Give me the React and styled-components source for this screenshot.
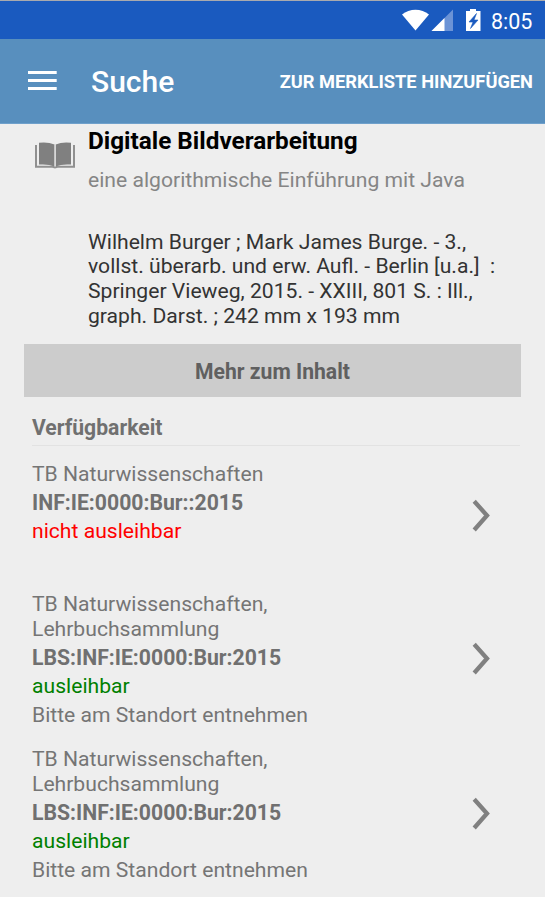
import React from "react";
import styled, { createGlobalStyle } from "styled-components";

const GlobalStyle = createGlobalStyle`
  * { box-sizing: border-box; }
  html, body { margin: 0; background: #eeeeee; }
  body { font-family: Roboto, sans-serif; font-size: 21.13px; color: #757575; overflow: hidden; }
  h1, h2, h3, p { margin: 0; }
  svg { display: block; flex: none; }
`;

const Screen = styled.div`
  width: 545px;
  height: 897px;
  overflow: hidden;
  background: #eeeeee;
`;

const StatusBar = styled.div`
  height: 39px;
  border-top: 1px solid #a9aaae;
  background: #1a5abf;
  display: flex;
  justify-content: flex-end;
  align-items: center;
  padding-right: 12px;
`;

const Clock = styled.span`
  width: 42px;
  margin-left: 10px;
  color: #fff;
  font-size: 21.5px;
  line-height: 25px;
  padding-top: 2px;
  white-space: nowrap;
`;

const Toolbar = styled.header`
  height: 85px;
  padding: 0 12px 0 28px;
  display: flex;
  align-items: center;
  color: #fff;
  background: #588fbe;
  border-bottom: 1px solid #6fa0cb;
`;

const MenuButton = styled.button`
  border: 0;
  padding: 0;
  background: none;
  color: inherit;
  margin-right: 34px;
`;

const PageTitle = styled.h1`
  font-size: 30px;
  font-weight: 500;
  line-height: 36px;
  padding-top: 2px;
`;

const ToolbarAction = styled.button`
  border: 0;
  padding: 1px 0 0;
  margin-left: auto;
  background: none;
  color: inherit;
  font: 700 18.25px/22px Roboto, sans-serif;
  white-space: nowrap;
`;

const Record = styled.section`
  display: grid;
  grid-template-columns: 54px 1fr;
  padding: 3px 24px 0 34px;
  height: 220px;
`;

const BookCell = styled.div`
  padding-top: 15px;
`;

const RecordTitle = styled.h2`
  color: #000;
  font-size: 24.3px;
  font-weight: 700;
  line-height: 28px;
  white-space: nowrap;
`;

const Subtitle = styled.p`
  margin-top: 12px;
  color: #858585;
  line-height: 25px;
  white-space: nowrap;
`;

const Details = styled.p`
  margin-top: 37.6px;
  color: #333;
  line-height: 24.75px;
  white-space: pre;
`;

const MoreButton = styled.button`
  display: block;
  width: 497px;
  height: 53px;
  margin: 0 24px;
  padding: 2px 0 0;
  border: 0;
  background: #cccccc;
  color: #606060;
  font: 700 21.15px/25px Roboto, sans-serif;
`;

const SectionHeading = styled.h3`
  height: 49px;
  margin: 0 25px 0 32px;
  padding-top: 18px;
  border-bottom: 1px solid #e2e2e2;
  color: #707070;
  font-size: 21.15px;
  font-weight: 700;
  line-height: 25px;
`;

const HoldingList = styled.div`
  padding: 5px 54px 0 32px;
`;

const Holding = styled.article`
  height: ${(p) => p.$height}px;
  display: flex;
  justify-content: space-between;
  align-items: center;
`;

const HoldingText = styled.div`
  align-self: flex-start;
  padding-top: 10.9px;
  display: flex;
  flex-direction: column;
  gap: 4px;
  line-height: 24.75px;
  white-space: pre;
`;

const CallNumber = styled.p`
  padding-top: 0.4px;
  margin-bottom: -0.4px;
  font-size: 21.2px;
  font-weight: 700;
  color: #707070;
`;

const Status = styled.p`
  color: ${(p) => (p.$available ? "#008000" : "#ff0000")};
`;

const holdings = [
  { place: "TB Naturwissenschaften", call: "INF:IE:0000:Bur::2015", status: "nicht ausleihbar", available: false, height: 130 },
  { place: "TB Naturwissenschaften,\nLehrbuchsammlung", call: "LBS:INF:IE:0000:Bur:2015", status: "ausleihbar", available: true, note: "Bitte am Standort entnehmen", height: 155 },
  { place: "TB Naturwissenschaften,\nLehrbuchsammlung", call: "LBS:INF:IE:0000:Bur:2015", status: "ausleihbar", available: true, note: "Bitte am Standort entnehmen", height: 155 },
];

const StatusIcons = () => (
  <svg width="80" height="38" viewBox="401 1 80 38">
    <path d="M402 14.5C409.500 8 421.500 8 429 14.500L415.500 30.500Z" fill="#fff" />
    <path d="M453 9.500V31H431.500Z" fill="#6b93d6" />
    <path d="M444.500 18V31H431.500Z" fill="#fff" />
    <path d="M470 9h6v2h4.500v20h-14.500V11h4Z" fill="#fff" />
    <path d="M476.500 13.500L469 22h4L470.500 28.500L478 20h-4Z" fill="#1a5abf" stroke="#1a5abf" strokeWidth=".6" />
  </svg>
);

const MenuIcon = () => (
  <svg width="29" height="20" viewBox="0 0 29 20" fill="currentColor">
    <path d="M0 0h28.700v3H0zM0 8h28.700v3H0zM0 16h28.700v3H0z" />
  </svg>
);

const BookIcon = () => (
  <svg width="42" height="28" viewBox="0 0 42 28">
    <path d="M2 3V24.800H18.500L21 25.500L23.500 24.800H40V3" fill="none" stroke="#909090" strokeWidth="2" />
    <path d="M5 .8Q14 -.3 20.500 2.500V24.500Q14 21.800 5 22.600Z" fill="#808080" />
    <path d="M37 .8Q28 -.3 21.700 2.500V24.500Q28 21.800 37 22.600Z" fill="#808080" />
    <path d="M21.100 3V24.500" stroke="#dcdcdc" strokeWidth="1" />
  </svg>
);

const Chevron = () => (
  <svg width="20" height="34" viewBox="0 0 20 34">
    <path d="M3.200 2.200L16 16.500L3.200 31" fill="none" stroke="#808080" strokeWidth="4.300" />
  </svg>
);

export default function App() {
  return (
    <Screen>
      <GlobalStyle />
      <StatusBar>
        <StatusIcons />
        <Clock>8:05</Clock>
      </StatusBar>
      <Toolbar>
        <MenuButton aria-label="Menü"><MenuIcon /></MenuButton>
        <PageTitle>Suche</PageTitle>
        <ToolbarAction>ZUR MERKLISTE HINZUFÜGEN</ToolbarAction>
      </Toolbar>
      <main>
        <Record>
          <BookCell><BookIcon /></BookCell>
          <div>
            <RecordTitle>Digitale Bildverarbeitung</RecordTitle>
            <Subtitle>eine algorithmische Einführung mit Java</Subtitle>
            <Details>{"Wilhelm Burger ; Mark James Burge. - 3.,\nvollst. überarb. und erw. Aufl. - Berlin [u.a.]  :\nSpringer Vieweg, 2015. - XXIII, 801 S. : Ill.,\ngraph. Darst. ; 242 mm x 193 mm"}</Details>
          </div>
        </Record>
        <MoreButton>Mehr zum Inhalt</MoreButton>
        <SectionHeading>Verfügbarkeit</SectionHeading>
        <HoldingList>
          {holdings.map((h, i) => (
            <Holding key={i} $height={h.height}>
              <HoldingText>
                <p>{h.place}</p>
                <CallNumber>{h.call}</CallNumber>
                <Status $available={h.available}>{h.status}</Status>
                {h.note && <p>{h.note}</p>}
              </HoldingText>
              <Chevron />
            </Holding>
          ))}
        </HoldingList>
      </main>
    </Screen>
  );
}
